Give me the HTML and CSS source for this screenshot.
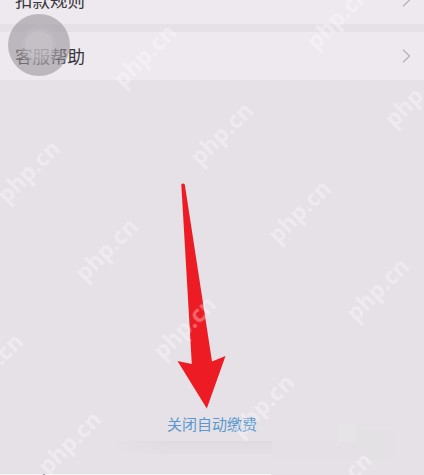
FILE: index.html
```html
<!DOCTYPE html>
<html lang="zh-CN">
<head>
<meta charset="utf-8">
<title>自动缴费</title>
<link rel="stylesheet" href="styles.css">
</head>
<body>
<main class="screen">
  <div class="row row-first"><span>扣款规则</span><svg class="chevron" viewBox="0 0 9 14"><path d="M1 .8 7.5 7 1 13.2"/></svg></div>
  <div class="row"><span>客服帮助</span><svg class="chevron" viewBox="0 0 9 14"><path d="M1 .8 7.5 7 1 13.2"/></svg></div>
  <div class="space"></div>
  <a class="close-link">关闭自动缴费</a>
  <div class="smudge"></div>
  <div class="edge"></div>
  <div class="patches"><i></i><i></i><i></i></div>
  <div class="assist"><div class="assist-mid"><div class="assist-core"></div></div></div>
  <svg class="overlay" viewBox="0 0 424 475">
    <path class="arrow" d="M181.3 184.5Q183 182.5 184.8 184.5L212 361.5 225.5 356 206.8 408.5 177.5 361 191.8 364Z"/>
    <path class="speck" d="M42.5 475Q44 472.5 45.5 475Z"/>
    <g class="marks">
      <text transform="translate(144 55) rotate(-45)">php.cn</text>
      <text transform="translate(337 17) rotate(-45)">php.cn</text>
      <text transform="translate(28 171) rotate(-45)">php.cn</text>
      <text transform="translate(106 249) rotate(-45)">php.cn</text>
      <text transform="translate(184 327) rotate(-45)">php.cn</text>
      <text transform="translate(262 405) rotate(-45)">php.cn</text>
      <text transform="translate(340 483) rotate(-45)">php.cn</text>
      <text transform="translate(221 133) rotate(-45)">php.cn</text>
      <text transform="translate(299 211) rotate(-45)">php.cn</text>
      <text transform="translate(377 289) rotate(-45)">php.cn</text>
      <text transform="translate(415 95) rotate(-45)">php.cn</text>
      <text transform="translate(-9 364) rotate(-45)">php.cn</text>
      <text transform="translate(69 442) rotate(-45)">php.cn</text>
    </g>
  </svg>
</main>
</body>
</html>
```
FILE: styles.css
```css
body { margin: 0; font-family: "Noto Sans CJK SC", sans-serif; }
.screen { position: relative; display: flex; flex-direction: column; height: 475px; overflow: hidden; background: #e5e1e6; }
.row { display: flex; align-items: center; justify-content: space-between; box-sizing: border-box; height: 48px; padding: 0 13px 0 15px; background: #ede9ee; color: #39363b; font-size: 17.5px; line-height: 26px; }
.row-first { height: 24px; margin-bottom: 8px; align-items: flex-end; padding-bottom: 11px; }
.row-first .chevron { margin-bottom: 6px; }
.chevron { width: 9px; height: 14px; fill: none; stroke: #b9b4bb; stroke-width: 1.4; }
.space { height: 332px; }
.close-link { align-self: center; height: 23px; color: #5a98cf; font-size: 15px; line-height: 23px; }
.smudge { height: 13px; margin: 6px 152px 0 112px; background: linear-gradient(90deg, #e5e1e6, transparent 35%), linear-gradient(#dedbdf, #e3dfe4); }
.edge { width: 271px; height: 1px; margin-top: 20px; background: #f6f4f6; }
.patches { position: absolute; left: 272px; top: 424px; display: flex; align-items: flex-end; }
.patches i { width: 66px; height: 20px; background: #e4e0e5; }
.patches i:nth-child(2) { width: 18px; height: 36px; background: linear-gradient(#e7e4e8 50%, #e4e0e5 50%); }
.patches i:nth-child(3) { width: 38px; height: 30px; background: #e4e1e5; }
.assist { position: absolute; left: 8px; top: 14px; display: grid; place-items: center; width: 62px; height: 62px; border-radius: 50%; background: rgba(152, 147, 153, .58); }
.assist-mid { display: grid; place-items: center; width: 43px; height: 43px; border-radius: 50%; background: rgba(192, 187, 193, .3); }
.assist-core { width: 28px; height: 28px; border-radius: 50%; background: rgba(208, 203, 209, .45); box-shadow: 0 0 0 3px rgba(200, 195, 201, .3); }
.row-first, .row-first span { position: relative; }
.overlay { position: absolute; inset: 0; width: 424px; height: 475px; z-index: 2; }
.arrow { fill: #ed1c24; }
.speck { fill: #a5a1a6; }
.marks { fill: #fff; opacity: .33; font: 700 23px "Open Sans", sans-serif; text-anchor: middle; }
.marks text { dominant-baseline: central; }
```
